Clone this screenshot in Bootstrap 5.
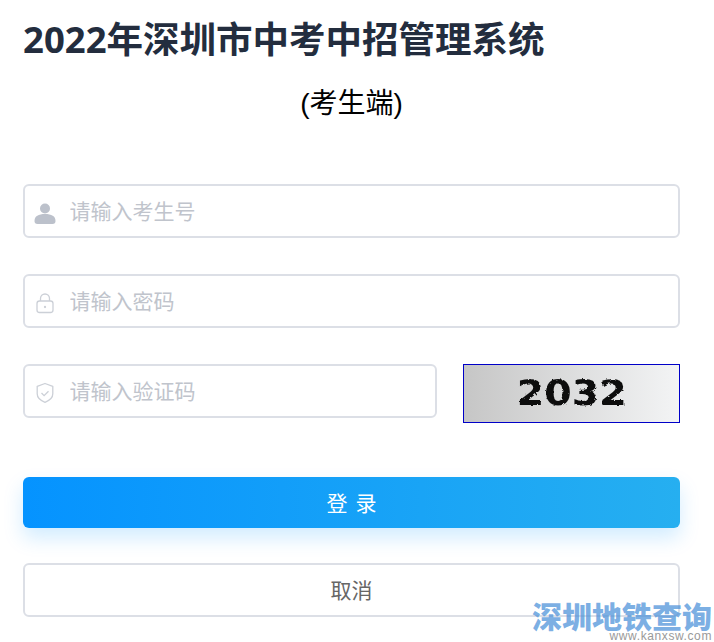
<!DOCTYPE html>
<html lang="zh-CN">
<head>
    <meta charset="UTF-8">
    <meta name="viewport" content="width=device-width, initial-scale=1.0">
    <title>2022年深圳市中考中招管理系统</title>
    <link href="https://cdn.jsdelivr.net/npm/bootstrap@5.3.3/dist/css/bootstrap.min.css" rel="stylesheet">
    <script src="https://cdn.jsdelivr.net/npm/bootstrap@5.3.3/dist/js/bootstrap.bundle.min.js"></script>
    <style>
        html, body { height: 642px; overflow: hidden; }
        body { font-family: "Liberation Sans", "Noto Sans CJK SC", sans-serif; background: #fff; }
        .login-wrap { padding: 15px 34px 0 23px; }
        .sys-title { font-family: "Noto Sans", "Noto Sans CJK SC", sans-serif; font-size: 36.5px; font-weight: 700; line-height: 48px; color: #232d3e; margin: 0; }
        .sys-sub { font-size: 28px; line-height: 40px; color: #000; margin: 21px 0 0; text-align: center; }
        .login-form { margin-top: 60px; display: flex; flex-direction: column; gap: 36px; }
        .field-box { height: 54px; border: 2px solid #dcdfe6; border-radius: 6px; padding-left: 9px; gap: 13px; }
        .field-box svg { width: 22px; height: 22px; flex: none; margin-top: 3px; }
        .field-box input { border: 0; outline: 0; padding: 2px 0 0 .5px; min-width: 0; flex: 1; font-size: 21px; background: transparent; }
        .field-box input::placeholder { color: #c0c4cc; opacity: 1; }
        .code-row { display: flex; gap: 26px; }
        .code-row .field-box { flex: 1; }
        .code-pic { width: 217px; height: 59px; flex: none; border: 1px solid #0000c8; background: linear-gradient(90deg, #c6c6c6, #f3f4f5); }
        .code-num { font-family: "DejaVu Sans", sans-serif; font-size: 35px; font-weight: 700; color: #111; filter: url(#rough) blur(.6px); transform: scaleX(1.13); }
        .btn-login { height: 51px; margin-top: 18px; padding-top: 8px; border: 0; border-radius: 6px; color: #fff; font-size: 21px; word-spacing: 2px; background: linear-gradient(90deg, #0593ff, #26aff0); box-shadow: 0 10px 20px rgba(5, 147, 255, .18); }
        .btn-login:hover, .btn-login:active { color: #fff; background: linear-gradient(90deg, #0593ff, #26aff0); }
        .btn-cancel { height: 54px; margin-top: -1px; padding-top: 8px; border: 2px solid #dcdfe6; border-radius: 6px; color: #666; font-size: 21px; background: #fff; }
        .site-mark { position: absolute; right: 2px; bottom: 0; text-align: right; }
        .mark-cn { font-family: "Noto Sans CJK SC", sans-serif; font-size: 30px; font-weight: 900; line-height: 30px; color: rgba(74, 144, 217, .72); }
        .mark-url { font-family: "Liberation Sans", sans-serif; font-size: 12px; line-height: 12px; letter-spacing: .6px; color: #999; }
    </style>
</head>
<body class="position-relative">
    <svg width="0" height="0" class="position-absolute">
        <filter id="rough"><feTurbulence type="fractalNoise" baseFrequency=".35" numOctaves="2" seed="4"/><feDisplacementMap in="SourceGraphic" scale="3"/></filter>
    </svg>
    <div class="login-wrap">
        <h1 class="sys-title">2022年深圳市中考中招管理系统</h1>
        <p class="sys-sub">(考生端)</p>

        <form class="login-form">
            <div class="field-box d-flex align-items-center">
                <svg viewBox="0 0 22 22"><circle cx="11" cy="6.500" r="5" fill="#bcc1cb"/><path d="M.500 19c0-5 4-7 10.500-7s10.500 2 10.500 7c0 2-1 3-3 3H3.500c-2 0-3-1-3-3z" fill="#bcc1cb"/></svg>
                <input type="text" placeholder="请输入考生号">
            </div>
            <div class="field-box d-flex align-items-center">
                <svg viewBox="0 0 22 22" fill="none" stroke="#ccd0d7" stroke-width="1.300"><rect x="3" y="9" width="16" height="11.500" rx="2.500"/><path d="M6.500 9V6.500a4.500 4.500 0 0 1 9 0V9"/><circle cx="11" cy="15" r=".5" fill="#ccd0d7"/></svg>
                <input type="password" placeholder="请输入密码">
            </div>
            <div class="code-row">
                <div class="field-box d-flex align-items-center">
                    <svg viewBox="0 0 22 22" fill="none" stroke="#ccd0d7" stroke-width="1.300"><path d="M11 1.500l7.800 2.800v7.500c0 4-3.600 6.900-7.800 8.500-4.200-1.600-7.800-4.500-7.800-8.500V4.300z" stroke-linejoin="round"/><path d="M7.500 11l2.600 2.600 4.400-4.400"/></svg>
                    <input type="text" placeholder="请输入验证码">
                </div>
                <div class="code-pic d-flex align-items-center justify-content-center">
                    <span class="code-num">2032</span>
                </div>
            </div>
            <button type="button" class="btn btn-login w-100">登 录</button>
            <button type="button" class="btn btn-cancel w-100">取消</button>
        </form>
    </div>

    <div class="site-mark">
        <div class="mark-cn">深圳地铁查询</div>
        <div class="mark-url">www.kanxsw.com</div>
    </div>
</body>
</html>
